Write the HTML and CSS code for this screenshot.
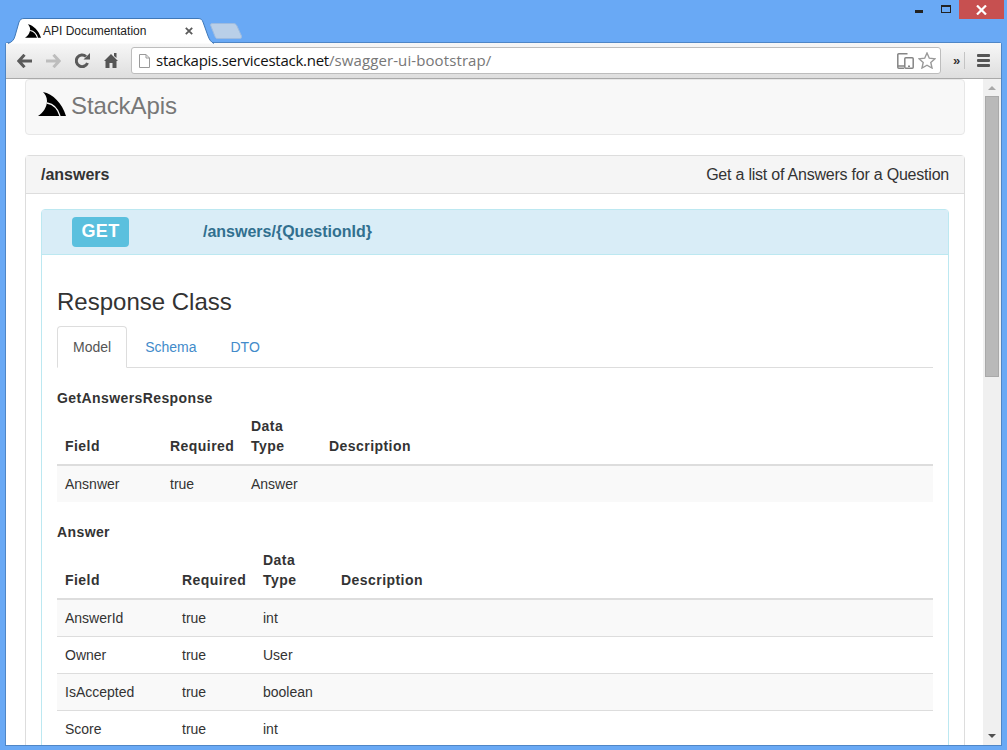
FILE: index.html
```html
<!DOCTYPE html>
<html lang="en">
<head>
    <meta charset="UTF-8">
    <title>API Documentation</title>
    <link rel="stylesheet" href="styles.css">
</head>
<body>
    <div class="window-controls">
        <span class="win-min"></span>
        <span class="win-max"></span>
        <span class="win-close">
            <svg width="11" height="10" viewBox="0 0 11 10"><path d="M1 0.5 L10 9.5 M10 0.5 L1 9.5" stroke="#fff" stroke-width="2.2"/></svg>
        </span>
    </div>

    <div class="tabstrip">
        <div class="tab">
            <svg class="tab-shape" width="206" height="26" viewBox="0 0 206 26"><path d="M0 25.5 C4 24 6 22 7 18 L11 4 C12 1.500 13.500 .5 16 .5 L190 .5 C193 .5 194 1.500 195 4 L200 18 C201.500 22 203 24 206 25.500" fill="#fff" stroke="#3f78b8"/></svg>
            <svg class="tab-fin" width="16" height="14" viewBox="0 0 28 24"><path d="M0 24 C5 21 9 15 9 9 C9 5 7 2 5 0 C15 2 24 11 28 24 Z" fill="#000"/><path d="M9 11 C15 12 20 17 22 24" fill="none" stroke="#fff" stroke-width="1.800"/></svg>
            <span class="tab-title">API Documentation</span>
            <svg class="tab-x" width="8" height="8" viewBox="0 0 8 8"><path d="M.8 .8 L7.200 7.200 M7.200 .8 L.8 7.200" stroke="#5a5a5a" stroke-width="1.800"/></svg>
        </div>
        <svg class="new-tab" width="32" height="16" viewBox="0 0 32 16"><path d="M.5 2 Q.5 .5 2 .5 L23 .5 C25 .5 26 1 27 3 L31.500 13 Q32 15.500 30 15.500 L8 15.500 C6 15.500 5.500 15 5 13.500 Z" fill="#b9cfe8" stroke="#9dbbe0"/></svg>
    </div>

    <div class="browser">
        <div class="toolbar">
            <svg class="tool" width="15" height="14" viewBox="0 0 15 14"><path d="M7.500 .8 L1.800 7 L7.500 13.200 M2.500 7 L15 7" fill="none" stroke="#5a5a5a" stroke-width="3"/></svg>
            <svg class="tool" width="15" height="14" viewBox="0 0 15 14"><path d="M7.500 .8 L13.200 7 L7.500 13.200 M12.500 7 L0 7" fill="none" stroke="#bdbdbd" stroke-width="3"/></svg>
            <svg class="tool" width="15" height="15" viewBox="0 0 15 15"><path d="M12.500 10 A5.800 5.800 0 1 1 11 3.500" fill="none" stroke="#5a5a5a" stroke-width="3"/><path d="M8.500 6.500 L15 6.500 L15 0 Z" fill="#5a5a5a"/></svg>
            <svg class="tool" width="14" height="15" viewBox="0 0 14 15"><path d="M7 1 L14 8 L12.500 8 L12.500 15 L8.500 15 L8.500 10 L5.500 10 L5.500 15 L1.500 15 L1.500 8 L0 8 Z M10 0 L12.500 0 L12.500 5 L10 3 Z" fill="#555"/></svg>
            <div class="omnibox">
                <svg class="page-icon" width="11" height="14" viewBox="0 0 11 14"><path d="M.5 .5 L7 .5 L10.500 4 L10.500 13.500 L.5 13.500 Z M7 .5 L7 4 L10.500 4" fill="#fff" stroke="#9a9a9a"/></svg>
                <span class="url">stackapis.servicestack.net<span class="url-path">/swagger-ui-bootstrap/</span></span>
                <svg class="device-icon" width="17" height="16" viewBox="0 0 17 16"><path d="M10.500 .8 L1.800 .8 Q.8 .8 .8 1.800 L.8 14.200 Q.8 15.200 1.800 15.200 L7 15.200 M8.800 4.800 L15.200 4.800 Q16.200 4.800 16.200 5.800 L16.200 14.200 Q16.200 15.200 15.200 15.200 L8.800 15.200 Q7.800 15.200 7.800 14.200 L7.800 5.800 Q7.800 4.800 8.800 4.800 M.8 13 L7.800 13 M11 13.200 L13 13.200" fill="none" stroke="#858585" stroke-width="1.500"/></svg>
                <svg class="star-icon" width="18" height="17" viewBox="0 0 18 17"><path d="M9 1 L11.300 6.200 L17 6.800 L12.800 10.500 L14 16 L9 13.200 L4 16 L5.200 10.500 L1 6.800 L6.700 6.200 Z" fill="#fff" stroke="#999" stroke-width="1.400"/></svg>
            </div>
            <span class="chevrons">»</span>
            <span class="tool-divider"></span>
            <div class="hamburger"><span></span><span></span><span></span></div>
        </div>

        <div class="viewport">
            <div class="page">
                <div class="navbar">
                    <svg class="logo" width="28" height="24" viewBox="0 0 28 24"><path d="M0 24 C5 21 9 15 9 9 C9 5 7 2 5 0 C15 2 24 11 28 24 Z" fill="#000"/><path d="M9 11 C15 12 20 17 22 24" fill="none" stroke="#f8f8f8" stroke-width="1.300"/></svg>
                    <span class="brand">StackApis</span>
                </div>

                <div class="panel">
                    <div class="panel-heading">
                        <span class="panel-path">/answers</span>
                        <span class="panel-summary">Get a list of Answers for a Question</span>
                    </div>
                    <div class="panel-body">
                        <div class="op">
                            <div class="op-heading">
                                <span class="verb">GET</span>
                                <span class="op-path">/answers/{QuestionId}</span>
                            </div>
                            <div class="op-body">
                                <h3 class="section-title">Response Class</h3>
                                <ul class="tabs">
                                    <li class="tab-item active">Model</li>
                                    <li class="tab-item">Schema</li>
                                    <li class="tab-item">DTO</li>
                                </ul>

                                <h4 class="model-name">GetAnswersResponse</h4>
                                <table class="model-table short">
                                    <thead>
                                        <tr><th>Field</th><th>Required</th><th>Data<br>Type</th><th>Description</th></tr>
                                    </thead>
                                    <tbody>
                                        <tr><td>Ansnwer</td><td>true</td><td>Answer</td><td></td></tr>
                                    </tbody>
                                </table>

                                <h4 class="model-name">Answer</h4>
                                <table class="model-table long">
                                    <thead>
                                        <tr><th>Field</th><th>Required</th><th>Data<br>Type</th><th>Description</th></tr>
                                    </thead>
                                    <tbody>
                                        <tr><td>AnswerId</td><td>true</td><td>int</td><td></td></tr>
                                        <tr><td>Owner</td><td>true</td><td>User</td><td></td></tr>
                                        <tr><td>IsAccepted</td><td>true</td><td>boolean</td><td></td></tr>
                                        <tr><td>Score</td><td>true</td><td>int</td><td></td></tr>
                                    </tbody>
                                </table>
                            </div>
                        </div>
                    </div>
                </div>
            </div>
            <div class="scrollbar">
                <span class="arrow-up"></span>
                <div class="scroll-track"><div class="scroll-thumb"></div></div>
                <span class="arrow-down"></span>
            </div>
        </div>
    </div>
</body>
</html>
```

FILE: styles.css
```css
* {
    box-sizing: border-box;
}

html, body {
    height: 100%;
}

body {
    margin: 0;
    background-color: #69a9f5;
    font-family: 'Liberation Sans', Arial, sans-serif;
    font-size: 14px;
    color: #333;
    overflow: hidden;
    display: flex;
    flex-direction: column;
    padding: 0 6px 5px 6px;
}

/* window buttons */
.window-controls {
    position: absolute;
    top: 0;
    right: 3px;
    display: flex;
    align-items: flex-start;
}

.win-min {
    width: 8px;
    height: 3px;
    margin-top: 10px;
    margin-right: 18px;
    background-color: #222;
}

.win-max {
    width: 10px;
    height: 8px;
    margin-top: 5px;
    margin-right: 8px;
    border: 1px solid #222;
    border-top-width: 2px;
}

.win-close {
    width: 45px;
    height: 19px;
    background-color: #c75050;
    display: flex;
    align-items: center;
    justify-content: center;
}

/* tabs */
.tabstrip {
    height: 25px;
    margin-top: 18px;
    flex: none;
    display: flex;
    align-items: flex-start;
}

.tab {
    position: relative;
    width: 206px;
    height: 26px;
    margin-left: 2px;
    display: flex;
    align-items: center;
    padding: 0 0 0 17px;
    z-index: 1;
}

.tab-shape {
    position: absolute;
    left: 0;
    top: 0;
}

.tab-fin, .tab-title, .tab-x {
    position: relative;
}

.tab-title {
    font-size: 12px;
    color: #222;
    margin-left: 2px;
    width: 142px;
}

.new-tab {
    margin-left: -4px;
    margin-top: 5px;
}

/* browser */
.browser {
    flex: 1;
    min-height: 0;
    display: flex;
    flex-direction: column;
    background-color: #fff;
    box-shadow: 0 0 0 1px #4f86c6;
    border-radius: 2px 2px 0 0;
}

.toolbar {
    flex: none;
    height: 36px;
    display: flex;
    align-items: center;
    padding-left: 11px;
    background: linear-gradient(#f7f7f7, #dedede);
    border-bottom: 1px solid #a9a9a9;
}

.tool {
    flex: none;
    margin-right: 14px;
}

.omnibox {
    width: 810px;
    height: 27px;
    margin-left: -1px;
    display: flex;
    align-items: center;
    padding: 0 4px 0 7px;
    background-color: #fff;
    border: 1px solid #bdbdbd;
    border-radius: 3px;
}

.url {
    flex: 1;
    margin-left: 6px;
    padding-bottom: 2px;
    font-family: 'Open Sans', 'Liberation Sans', sans-serif;
    font-size: 15px;
    letter-spacing: -0.26px;
    color: #111;
}

.url-path {
    letter-spacing: 0.1px;
    color: #777;
}

.device-icon {
    margin-right: 4px;
}

.chevrons {
    margin-left: 12px;
    font-size: 13px;
    line-height: 14px;
    color: #333;
    font-weight: bold;
}

.tool-divider {
    width: 1px;
    height: 17px;
    margin-left: 4px;
    background-color: #c4c4c4;
}

.hamburger {
    margin-left: 12px;
    width: 13px;
    display: flex;
    flex-direction: column;
    gap: 2px;
}

.hamburger span {
    height: 3px;
    background-color: #555;
    border-radius: 1px;
}

/* page */
.viewport {
    flex: 1;
    min-height: 0;
    display: flex;
    overflow: hidden;
}

.page {
    flex: 1;
    min-width: 0;
    padding: 0 18px 0 19px;
    overflow: hidden;
}

.navbar {
    height: 56px;
    display: flex;
    align-items: flex-start;
    padding: 12px 0 0 12px;
    background-color: #f8f8f8;
    border: 1px solid #e7e7e7;
    border-radius: 4px;
}

.brand {
    margin-left: 5px;
    font-size: 24px;
    line-height: 28px;
    letter-spacing: -0.1px;
    color: #777;
}

.panel {
    margin-top: 20px;
    background-color: #fff;
    border: 1px solid #ddd;
    border-radius: 4px;
}

.panel-heading {
    height: 38px;
    display: flex;
    align-items: center;
    justify-content: space-between;
    padding: 0 15px;
    background-color: #f5f5f5;
    border-bottom: 1px solid #ddd;
    font-size: 16px;
}

.panel-path {
    font-weight: bold;
}

.panel-summary {
    letter-spacing: -0.22px;
}

.panel-body {
    padding: 15px;
}

.op {
    border: 1px solid #bce8f1;
    border-radius: 4px;
}

.op-heading {
    height: 45px;
    display: flex;
    align-items: center;
    padding-left: 30px;
    background-color: #d9edf7;
    border-bottom: 1px solid #bce8f1;
}

.verb {
    width: 57px;
    height: 30px;
    line-height: 28px;
    text-align: center;
    font-size: 18px;
    font-weight: bold;
    letter-spacing: 0.4px;
    color: #fff;
    background-color: #5bc0de;
    border-radius: 4px;
}

.op-path {
    margin-left: 74px;
    font-size: 16px;
    font-weight: bold;
    color: #31708f;
}

.op-body {
    padding: 15px;
}

.section-title {
    margin: 19px 0 11px 0;
    font-size: 24px;
    line-height: 26px;
    font-weight: 500;
}

.tabs {
    list-style: none;
    margin: 0;
    padding: 0;
    display: flex;
    height: 42px;
    border-bottom: 1px solid #ddd;
}

.tab-item {
    height: 42px;
    padding: 10px 15px;
    margin-right: 2px;
    line-height: 20px;
    color: #428bca;
    border: 1px solid transparent;
}

.tab-item.active {
    color: #555;
    background-color: #fff;
    border-color: #ddd #ddd #fff #ddd;
    border-radius: 4px 4px 0 0;
}

.model-name {
    margin: 20px 0 8px 0;
    font-size: 14px;
    line-height: 20px;
    font-weight: bold;
    letter-spacing: 0.4px;
}

.model-table {
    width: 100%;
    border-collapse: collapse;
    border-spacing: 0;
    table-layout: fixed;
}

.model-table th {
    text-align: left;
    vertical-align: bottom;
    padding: 0 8px 8px 8px;
    line-height: 20px;
    letter-spacing: 0.45px;
    border-bottom: 2px solid #ddd;
}

.model-table td {
    padding: 8px;
    line-height: 20px;
    height: 37px;
    border-top: 1px solid #ddd;
}

.model-table tbody tr:first-child td {
    border-top: none;
    height: 36px;
}

.model-table tbody tr:nth-child(odd) {
    background-color: #f9f9f9;
}

.model-table.short th:nth-child(1) { width: 105px; }
.model-table.short th:nth-child(2) { width: 81px; }
.model-table.short th:nth-child(3) { width: 78px; }

.model-table.long th:nth-child(1) { width: 117px; }
.model-table.long th:nth-child(2) { width: 81px; }
.model-table.long th:nth-child(3) { width: 78px; }

/* scrollbar */
.scrollbar {
    flex: none;
    width: 18px;
    display: flex;
    flex-direction: column;
    align-items: center;
    background-color: #f0f0f0;
}

.scroll-track {
    flex: 1;
    width: 100%;
}

.scroll-thumb {
    width: 14px;
    height: 281px;
    margin: 6px 2px 0 2px;
    background-color: #b9b9b9;
    border: 1px solid #a9a9a9;
}

.arrow-up, .arrow-down {
    width: 0;
    height: 0;
    flex: none;
    border-left: 4px solid transparent;
    border-right: 4px solid transparent;
}

.arrow-up {
    margin-top: 7px;
    border-bottom: 4px solid #a8a8a8;
}

.arrow-down {
    margin-bottom: 7px;
    border-top: 4px solid #505050;
}
```
